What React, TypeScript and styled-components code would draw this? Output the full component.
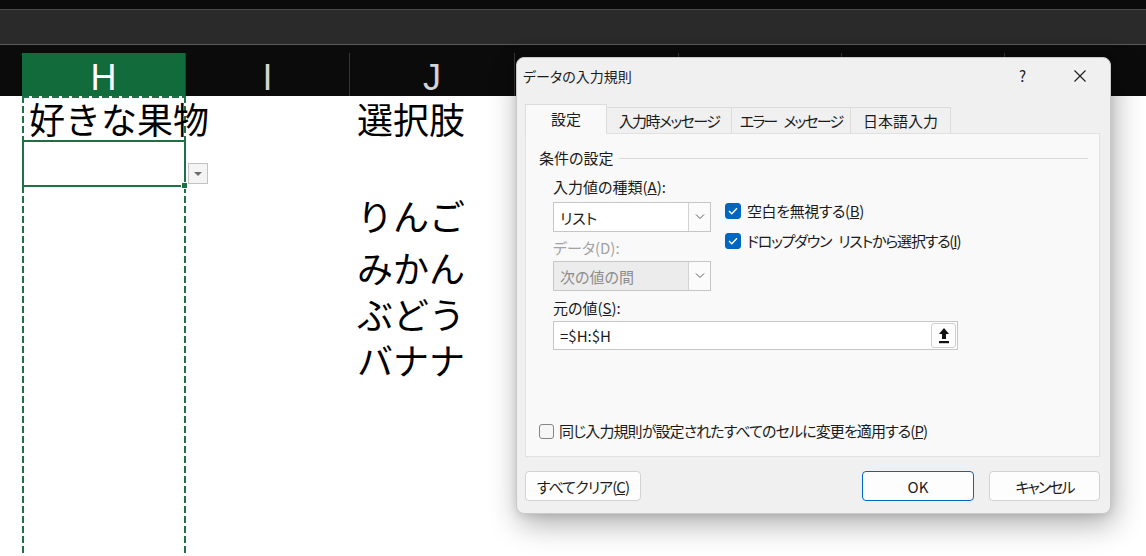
import styled, { createGlobalStyle } from "styled-components";

const GlobalStyle = createGlobalStyle`
  html, body {
    margin: 0;
    padding: 0;
    background: #ffffff;
  }
`;

const Screen = styled.div`
  position: relative;
  width: 1146px;
  height: 556px;
  overflow: hidden;
  background: #ffffff;
`;

const TopStrip = styled.div`
  height: 9px;
  background: #0b0b0b;
  border-bottom: 1px solid #4b4b4b;
`;

const FormulaBar = styled.div`
  height: 34px;
  background: #2a2a2a;
  border-bottom: 1px solid #5a5a5a;
`;

const HeaderRow = styled.div`
  display: grid;
  grid-template-columns: 22px 164px 164px 165px 164px 163px 163px 1fr;
  align-items: end;
  height: 51px;
  background: #0b0b0b;
`;

const ColHeader = styled.div<{ $selected?: boolean }>`
  box-sizing: border-box;
  height: 43px;
  padding-top: 6px;
  display: flex;
  align-items: center;
  justify-content: center;
  border-right: 1px solid #353535;
  background: ${(p) => (p.$selected ? "#116b3a" : "transparent")};
  color: ${(p) => (p.$selected ? "#ffffff" : "#d4d4d4")};
  font-family: "Liberation Sans", Arial, sans-serif;
  font-size: 36px;
  line-height: 30px;
`;

const Sheet = styled.div`
  display: grid;
  grid-template-columns: 22px 164px 164px 165px 1fr;
  grid-template-rows: 44px 47px 56px 47px 46px 46px 1fr;
  height: 460px;
  background: #ffffff;
`;

const Cell = styled.div<{ $col: number; $row: number }>`
  grid-column: ${(p) => p.$col};
  grid-row: ${(p) => p.$row};
  display: flex;
  align-items: center;
  padding-left: 7px;
  font-family: "Noto Sans CJK JP", sans-serif;
  font-size: 36px;
  line-height: 1;
  color: #000000;
  white-space: nowrap;
  z-index: 1;
`;

const ColumnMarquee = styled.div`
  grid-column: 2;
  grid-row: 1 / -1;
  background:
    repeating-linear-gradient(to bottom, #1e7145 0 7px, #ffffff 7px 10px) left top / 2px 100% no-repeat,
    repeating-linear-gradient(to bottom, #1e7145 0 7px, #ffffff 7px 10px) right top / 2px 100% no-repeat,
    repeating-linear-gradient(to right, #1e7145 0 7px, #ffffff 7px 10px) left top / 100% 2px no-repeat;
`;

const ActiveCell = styled.div`
  grid-column: 2;
  grid-row: 2;
  position: relative;
  border: 2px solid #1e7145;
  z-index: 2;

  &::after {
    content: "";
    position: absolute;
    right: -4px;
    bottom: -4px;
    width: 5px;
    height: 5px;
    background: #1e7145;
    border: 1px solid #ffffff;
  }
`;

const DropButton = styled.div`
  grid-column: 3;
  grid-row: 2;
  align-self: end;
  justify-self: start;
  box-sizing: border-box;
  width: 20px;
  height: 21px;
  margin: 0 0 3px 2px;
  display: flex;
  align-items: center;
  justify-content: center;
  background: #f4f4f4;
  border: 1px solid #c3c3c3;
`;

const Dialog = styled.div`
  position: absolute;
  left: 516px;
  top: 57px;
  width: 595px;
  height: 457px;
  box-sizing: border-box;
  display: flex;
  flex-direction: column;
  background: #f0f0f0;
  border: 1px solid #c9c9c9;
  border-radius: 8px;
  box-shadow: 3px 10px 30px rgba(0, 0, 0, 0.32), 0 2px 8px rgba(0, 0, 0, 0.1);
  font-family: "Noto Sans CJK JP", sans-serif;
  font-feature-settings: "palt" 1;
  font-size: 15px;
  color: #1b1b1b;
`;

const TitleBar = styled.div`
  display: flex;
  align-items: flex-start;
  height: 46px;
  box-sizing: border-box;
  padding: 8px 2px 0 6px;
`;

const Title = styled.div`
  flex: 1;
  font-size: 14px;
  line-height: 20px;
`;

const TitleButton = styled.div`
  width: 57px;
  height: 20px;
  display: flex;
  align-items: center;
  justify-content: center;
  font-size: 15px;
  line-height: 20px;
`;

const TabRow = styled.div`
  display: flex;
  align-items: flex-end;
  height: 29px;
  padding-left: 8px;
`;

const Tab = styled.div<{ $width: number; $active?: boolean; $track?: number }>`
  box-sizing: border-box;
  width: ${(p) => p.$width}px;
  height: ${(p) => (p.$active ? 30 : 26)}px;
  margin-bottom: ${(p) => (p.$active ? -1 : 0)}px;
  padding-bottom: ${(p) => (p.$active ? 3 : 0)}px;
  display: flex;
  align-items: center;
  justify-content: center;
  background: ${(p) => (p.$active ? "#f9f9f9" : "#f0f0f0")};
  border: 1px solid #dcdcdc;
  border-bottom: none;
  position: relative;
  z-index: ${(p) => (p.$active ? 1 : 0)};
  letter-spacing: ${(p) => p.$track ?? 0}px;
  white-space: pre;

  & + & {
    margin-left: -1px;
  }
`;

const Panel = styled.div`
  box-sizing: border-box;
  height: 324px;
  margin: 0 10px 0 8px;
  padding: 0 11px 0 13px;
  display: flex;
  flex-direction: column;
  background: #f9f9f9;
  border: 1px solid #e1e1e1;
`;

const Legend = styled.div`
  display: flex;
  align-items: center;
  gap: 6px;
  height: 18px;
  margin-top: 15px;
  line-height: 18px;

  &::after {
    content: "";
    flex: 1;
    height: 1px;
    background: #dadada;
  }
`;

const FormBody = styled.div`
  display: flex;
  flex-direction: column;
  padding-left: 14px;
`;

const Label = styled.div<{ $gap: number; $disabled?: boolean }>`
  margin-top: ${(p) => p.$gap}px;
  height: 18px;
  line-height: 18px;
  color: ${(p) => (p.$disabled ? "#a2a2a2" : "#1b1b1b")};
  white-space: nowrap;
`;

const FieldRow = styled.div`
  display: flex;
  gap: 14px;
`;

const FieldColumn = styled.div`
  display: flex;
  flex-direction: column;
  width: 158px;
`;

const CheckColumn = styled.div`
  display: flex;
  flex-direction: column;
  gap: 12px;
  padding-top: 6px;
`;

const Combo = styled.div<{ $gap: number; $disabled?: boolean }>`
  box-sizing: border-box;
  display: flex;
  height: 30px;
  margin-top: ${(p) => p.$gap}px;
  background: ${(p) => (p.$disabled ? "#ececec" : "#ffffff")};
  border: 1px solid #c6c6c6;
  color: ${(p) => (p.$disabled ? "#8d8d8d" : "#1b1b1b")};
`;

const ComboText = styled.div`
  flex: 1;
  display: flex;
  align-items: center;
  padding-left: 6px;
`;

const ComboArrow = styled.div`
  width: 21px;
  display: flex;
  align-items: center;
  justify-content: center;
  background: #fbfbfb;
  border-left: 1px solid #d2d2d2;
`;

const CheckRow = styled.label`
  display: flex;
  align-items: center;
  gap: 6px;
  height: 18px;
  line-height: 18px;
  white-space: pre;
`;

const CheckText = styled.span<{ $track?: number }>`
  letter-spacing: ${(p) => p.$track ?? 0}px;
`;

const CheckBox = styled.span<{ $checked?: boolean }>`
  box-sizing: border-box;
  width: ${(p) => (p.$checked ? 16 : 15)}px;
  height: ${(p) => (p.$checked ? 16 : 15)}px;
  display: flex;
  align-items: center;
  justify-content: center;
  border-radius: 3px;
  background: ${(p) => (p.$checked ? "#0067c0" : "#f6f6f6")};
  border: 1px solid ${(p) => (p.$checked ? "#0067c0" : "#858585")};
`;

const SourceInput = styled.div`
  box-sizing: border-box;
  display: flex;
  align-items: center;
  width: 405px;
  height: 29px;
  margin-top: 4px;
  padding-left: 6px;
  background: #ffffff;
  border: 1px solid #c6c6c6;
`;

const RefButton = styled.div`
  box-sizing: border-box;
  width: 25px;
  height: 25px;
  margin: 0 1px 0 auto;
  display: flex;
  align-items: center;
  justify-content: center;
  background: #fdfdfd;
  border: 1px solid #d0d0d0;
  border-radius: 3px;
`;

const ApplyRow = styled(CheckRow)`
  gap: 5px;
  margin-top: auto;
  margin-bottom: 16px;
`;

const Footer = styled.div`
  display: flex;
  gap: 15px;
  padding: 14px 10px 0 8px;
`;

const Button = styled.div<{ $width: number; $primary?: boolean; $track?: number }>`
  box-sizing: border-box;
  width: ${(p) => p.$width}px;
  height: 30px;
  display: flex;
  align-items: center;
  justify-content: center;
  background: #fdfdfd;
  border: 1px solid ${(p) => (p.$primary ? "#0067c0" : "#d2d2d2")};
  border-radius: 4px;
  letter-spacing: ${(p) => p.$track ?? 0}px;
  white-space: nowrap;

  &:nth-child(2) {
    margin-left: auto;
  }
`;

const Gap = styled.span`
  display: inline-block;
  width: 7px;
`;

function Chevron() {
  return (
    <svg width="10" height="6" viewBox="0 0 10 6">
      <path d="M1 0.5 L5 4.5 L9 0.5" fill="none" stroke="#5c5c5c" strokeWidth="1" />
    </svg>
  );
}

function Check() {
  return (
    <svg width="10" height="8" viewBox="0 0 10 8">
      <path d="M1 4 L3.8 6.8 L9 1.2" fill="none" stroke="#ffffff" strokeWidth="1.4" />
    </svg>
  );
}

function App() {
  return (
    <>
      <GlobalStyle />
      <Screen>
        <TopStrip />
        <FormulaBar />
        <HeaderRow>
          <div />
          <ColHeader $selected>H</ColHeader>
          <ColHeader>I</ColHeader>
          <ColHeader>J</ColHeader>
          <ColHeader />
          <ColHeader />
          <ColHeader />
          <div />
        </HeaderRow>
        <Sheet>
          <ColumnMarquee />
          <ActiveCell />
          <DropButton>
            <svg width="8" height="4" viewBox="0 0 8 4">
              <path d="M0 0 H8 L4 4 Z" fill="#6d6d6d" />
            </svg>
          </DropButton>
          <Cell $col={2} $row={1}>好きな果物</Cell>
          <Cell $col={4} $row={1}>選択肢</Cell>
          <Cell $col={4} $row={3}>りんご</Cell>
          <Cell $col={4} $row={4}>みかん</Cell>
          <Cell $col={4} $row={5}>ぶどう</Cell>
          <Cell $col={4} $row={6}>バナナ</Cell>
        </Sheet>

        <Dialog>
          <TitleBar>
            <Title>データの入力規則</Title>
            <TitleButton>?</TitleButton>
            <TitleButton>
              <svg width="12" height="12" viewBox="0 0 12 12">
                <path d="M0.5 0.5 L11.5 11.5 M11.5 0.5 L0.5 11.5" stroke="#1b1b1b" strokeWidth="1.1" />
              </svg>
            </TitleButton>
          </TitleBar>
          <TabRow>
            <Tab $width={82} $active>設定</Tab>
            <Tab $width={126} $track={-1.6}>入力時メッセージ</Tab>
            <Tab $width={120} $track={-1.9}>
              エラー<Gap />メッセージ
            </Tab>
            <Tab $width={101}>日本語入力</Tab>
          </TabRow>
          <Panel>
            <Legend>条件の設定</Legend>
            <FormBody>
              <Label $gap={11}>
                入力値の種類(<u>A</u>):
              </Label>
              <FieldRow>
                <FieldColumn>
                  <Combo $gap={6}>
                    <ComboText>リスト</ComboText>
                    <ComboArrow>
                      <Chevron />
                    </ComboArrow>
                  </Combo>
                  <Label $gap={7} $disabled>
                    データ(D):
                  </Label>
                  <Combo $gap={4} $disabled>
                    <ComboText>次の値の間</ComboText>
                    <ComboArrow>
                      <Chevron />
                    </ComboArrow>
                  </Combo>
                </FieldColumn>
                <CheckColumn>
                  <CheckRow>
                    <CheckBox $checked>
                      <Check />
                    </CheckBox>
                    <CheckText $track={-0.4}>
                      空白を無視する(<u>B</u>)
                    </CheckText>
                  </CheckRow>
                  <CheckRow>
                    <CheckBox $checked>
                      <Check />
                    </CheckBox>
                    <CheckText $track={-1.2}>
                      ドロップダウン<Gap />リストから選択する(<u>I</u>)
                    </CheckText>
                  </CheckRow>
                </CheckColumn>
              </FieldRow>
              <Label $gap={8}>
                元の値(<u>S</u>):
              </Label>
              <SourceInput>
                =$H:$H
                <RefButton>
                  <svg width="10" height="16" viewBox="0 0 10 16">
                    <path d="M5 0 L10 6 H7 V11 H3 V6 H0 Z" fill="#111111" />
                    <rect x="0" y="13" width="10" height="2.2" fill="#111111" />
                  </svg>
                </RefButton>
              </SourceInput>
            </FormBody>
            <ApplyRow>
              <CheckBox />
              <CheckText $track={-0.9}>
                同じ入力規則が設定されたすべてのセルに変更を適用する(<u>P</u>)
              </CheckText>
            </ApplyRow>
          </Panel>
          <Footer>
            <Button $width={116} $track={-0.9}>
              すべてクリア(<u>C</u>)
            </Button>
            <Button $width={112} $primary>
              OK
            </Button>
            <Button $width={111} $track={-2}>
              キャンセル
            </Button>
          </Footer>
        </Dialog>
      </Screen>
    </>
  );
}

export default App;
